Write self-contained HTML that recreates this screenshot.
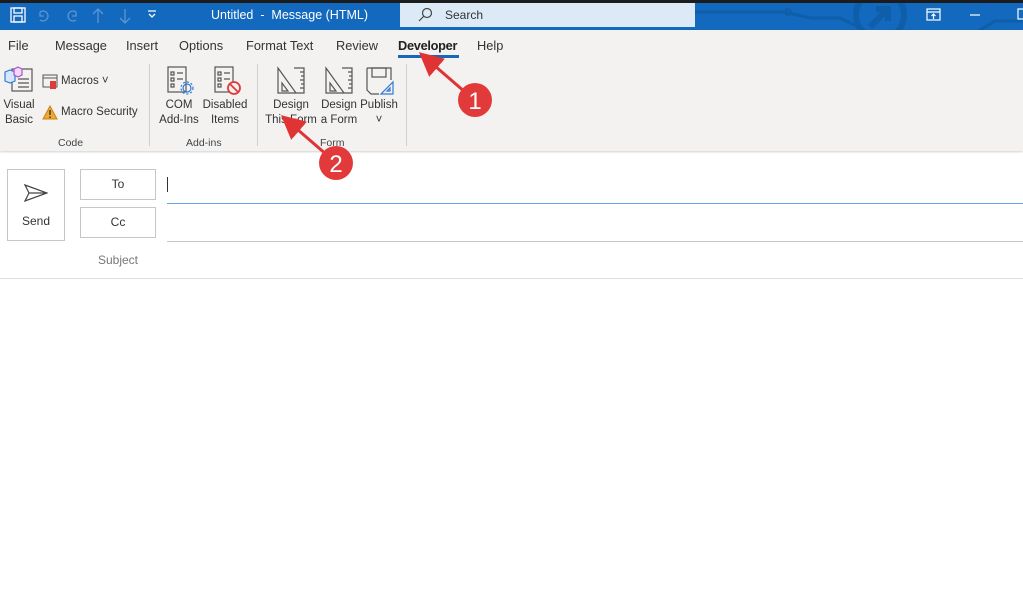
<!DOCTYPE html>
<html><head><meta charset="utf-8"><style>
*{margin:0;padding:0;box-sizing:border-box}
body{width:1023px;height:599px;overflow:hidden;background:#fff;font-family:"Liberation Sans",sans-serif;position:relative}
.a{position:absolute}
.t{font-size:11.5px;color:#333;text-align:center;line-height:15px}
.tab{position:absolute;top:38px;font-size:12.8px;color:#333}
.sep{position:absolute;top:64px;width:1px;height:82px;background:#d2d0ce}
.grp{position:absolute;top:137px;font-size:10.5px;color:#444}
</style></head><body>
<div class="a" style="left:0;top:0;width:1023px;height:3px;background:#1c1c1c"></div>
<div class="a" style="left:0;top:3px;width:1023px;height:27px;background:#1269bd"></div>
<svg class="a" style="left:690px;top:3px" width="333" height="27">
<path d="M5 9 H95 L120 15 H150 L175 27" stroke="#0f5ea9" stroke-width="3" fill="none"/>
<circle cx="98" cy="9" r="3" stroke="#0f5ea9" stroke-width="2" fill="none"/>
<circle cx="190" cy="12" r="24" stroke="#0f5ea9" stroke-width="6" fill="none"/>
<path d="M180 24 L198 6 M186 6 H198 V18" stroke="#0f5ea9" stroke-width="6" fill="none"/>
<path d="M290 27 L305 18 H333" stroke="#0f5ea9" stroke-width="3" fill="none"/>
</svg>
<svg class="a" style="left:10px;top:7px" width="150" height="18" fill="none" stroke-width="1.3">
<rect x="1" y="1" width="14" height="14" stroke="#fff"/><rect x="4" y="1" width="8" height="5" stroke="#fff"/><rect x="4" y="9" width="8" height="6" stroke="#fff"/>
<path d="M30 5 a5 5 0 1 1 0 8 M30 5 v4 h4" stroke="#5e95d4"/>
<path d="M66 5 a5 5 0 1 0 0 8 M66 5 v4 h-4" stroke="#5e95d4"/>
<path d="M88 16 V2 M83 7 L88 2 L93 7" stroke="#5e95d4"/>
<path d="M115 2 V16 M110 11 L115 16 L120 11" stroke="#5e95d4"/>
<path d="M138 4 H146 M139 7 L142 10 L145 7" stroke="#fff"/>
</svg>
<div class="a" style="left:211px;top:8px;font-size:12.5px;color:#fff">Untitled&nbsp; - &nbsp;Message (HTML)</div>
<div class="a" style="left:400px;top:3px;width:295px;height:24px;background:#dce9f7"></div>
<svg class="a" style="left:417px;top:7px" width="16" height="16" fill="none" stroke="#444" stroke-width="1.2"><circle cx="10" cy="6" r="4.5"/><path d="M7 9 L2 14"/></svg>
<div class="a" style="left:445px;top:8px;font-size:12px;color:#333">Search</div>
<svg class="a" style="left:926px;top:8px" width="97" height="14" fill="none" stroke="#fff" stroke-width="1.2"><rect x="1" y="1" width="13" height="11"/><path d="M1 4 H14 M7.5 11 V6 M5.5 8 L7.5 6 L9.5 8"/><path d="M44 7 H54"/><rect x="92" y="1" width="10" height="10"/></svg>
<div class="a" style="left:0;top:30px;width:1023px;height:121px;background:#f3f2f1;box-shadow:0 1px 2px rgba(0,0,0,.18)"></div>
<div class="tab" style="left:8px">File</div>
<div class="tab" style="left:55px">Message</div>
<div class="tab" style="left:126px">Insert</div>
<div class="tab" style="left:179px">Options</div>
<div class="tab" style="left:246px">Format Text</div>
<div class="tab" style="left:336px">Review</div>
<div class="tab" style="left:398px;font-weight:bold;color:#222;letter-spacing:-0.3px">Developer</div>
<div class="a" style="left:398px;top:55px;width:61px;height:3px;background:#1a66b8"></div>
<div class="tab" style="left:477px">Help</div>
<svg class="a" style="left:4px;top:66px" width="30" height="28" fill="none" stroke-width="1.2"><rect x="8" y="3" width="20" height="22" stroke="#555"/><path d="M14 13 H25 M14 17 H25 M14 21 H25" stroke="#555"/><path d="M1 6 L6 4 L11 6 V15 L6 17 L1 15Z" stroke="#2d7ad6" fill="#d6e7fb"/><path d="M10 3 L14 1 L18 3 V9 L14 11 L10 9Z" stroke="#b24bd1" fill="#f0d8f8"/></svg>
<div class="t a" style="left:2px;top:98px;width:34px">Visual<br>Basic</div>
<svg class="a" style="left:42px;top:74px" width="18" height="16" fill="none"><rect x="1" y="1" width="14" height="12" stroke="#555"/><path d="M1 4 H15" stroke="#555"/><rect x="8" y="7" width="6" height="8" fill="#e03b3b"/></svg>
<div class="a" style="left:61px;top:75px;font-size:11.5px;color:#333">Macros ˅</div>
<svg class="a" style="left:42px;top:105px" width="16" height="15"><path d="M8 1 L15 14 H1Z" fill="#f0a830" stroke="#c98410"/><path d="M8 5 V10 M8 11.5 V13" stroke="#333" stroke-width="1.4"/></svg>
<div class="a" style="left:61px;top:106px;font-size:11.5px;color:#333">Macro Security</div>
<div class="grp" style="left:58px">Code</div>
<div class="sep" style="left:149px"></div>
<svg class="a" style="left:166px;top:66px" width="30" height="30" fill="none" stroke-width="1.2"><rect x="2" y="1" width="18" height="25" stroke="#555"/><path d="M5 6 h3 v3 h-3z M11 7 H17 M5 12 h3 v3 h-3z M11 13 H17 M5 18 h3 v3 h-3z" stroke="#555"/><circle cx="21" cy="22" r="4" stroke="#2d7ad6"/><circle cx="21" cy="22" r="6" stroke="#2d7ad6" stroke-dasharray="2 2"/></svg>
<div class="t a" style="left:156px;top:98px;width:46px">COM<br>Add-Ins</div>
<svg class="a" style="left:213px;top:66px" width="30" height="30" fill="none" stroke-width="1.2"><rect x="2" y="1" width="18" height="25" stroke="#555"/><path d="M5 6 h3 v3 h-3z M11 7 H17 M5 12 h3 v3 h-3z M11 13 H17 M5 18 h3 v3 h-3z" stroke="#555"/><circle cx="21" cy="22" r="6" stroke="#e03b3b" stroke-width="1.8" fill="#f3f2f1"/><path d="M17 18 L25 26" stroke="#e03b3b" stroke-width="1.8"/></svg>
<div class="t a" style="left:200px;top:98px;width:50px">Disabled<br>Items</div>
<div class="grp" style="left:186px">Add-ins</div>
<div class="sep" style="left:257px"></div>
<svg class="a" style="left:276px;top:66px" width="30" height="30" fill="none" stroke="#555" stroke-width="1.2"><path d="M2 2 L20 27 H2Z M6 17 L12 25 H6Z M18 2 H28 V27 H20 M28 6 H24 M28 10 H25 M28 14 H24 M28 18 H25 M28 22 H24"/></svg>
<div class="t a" style="left:264px;top:98px;width:54px">Design<br>This Form</div>
<svg class="a" style="left:324px;top:66px" width="30" height="30" fill="none" stroke="#555" stroke-width="1.2"><path d="M2 2 L20 27 H2Z M6 17 L12 25 H6Z M18 2 H28 V27 H20 M28 6 H24 M28 10 H25 M28 14 H24 M28 18 H25 M28 22 H24"/></svg>
<div class="t a" style="left:317px;top:98px;width:44px">Design<br>a Form</div>
<svg class="a" style="left:365px;top:66px" width="30" height="30" fill="none" stroke-width="1.2"><path d="M2 2 H26 V14 M2 2 V24 L6 28 H14" stroke="#555"/><rect x="7" y="2" width="14" height="9" stroke="#555"/><path d="M16 28 L28 16 V28Z M22 25 L25 22 V25Z" stroke="#2d7ad6"/></svg>
<div class="t a" style="left:359px;top:98px;width:40px">Publish<br>˅</div>
<div class="grp" style="left:320px">Form</div>
<div class="sep" style="left:406px"></div>
<div class="a" style="left:7px;top:169px;width:58px;height:72px;border:1px solid #c8c6c4;background:#fff"></div>
<svg class="a" style="left:24px;top:184px" width="24" height="18" fill="none" stroke="#444" stroke-width="1.2"><path d="M1 1 L23 9 L1 17 L5 9Z M5 9 H23"/></svg>
<div class="a" style="left:7px;top:214px;width:58px;text-align:center;font-size:12px;color:#333">Send</div>
<div class="a" style="left:80px;top:169px;width:76px;height:31px;border:1px solid #c8c6c4;text-align:center;line-height:29px;font-size:12px;color:#333">To</div>
<div class="a" style="left:80px;top:207px;width:76px;height:31px;border:1px solid #c8c6c4;text-align:center;line-height:29px;font-size:12px;color:#333">Cc</div>
<div class="a" style="left:167px;top:177px;width:1px;height:15px;background:#333"></div>
<div class="a" style="left:167px;top:203px;width:856px;height:1px;background:#62a8e6"></div>
<div class="a" style="left:167px;top:241px;width:856px;height:1px;background:#c8c6c4"></div>
<div class="a" style="left:80px;top:253px;width:76px;text-align:center;font-size:12px;color:#777">Subject</div>
<div class="a" style="left:0;top:278px;width:1023px;height:1px;background:#e1dfdd"></div>
<svg class="a" style="left:0;top:0" width="1023" height="599">
<defs><marker id="m" markerWidth="8" markerHeight="8" refX="4" refY="4" orient="auto"><path d="M0 0 L8 4 L0 8Z" fill="#e03434"/></marker></defs>
<path d="M465 92 L428 60" stroke="#e03434" stroke-width="3" marker-end="url(#m)"/>
<path d="M327 155 L290 123" stroke="#e03434" stroke-width="3" marker-end="url(#m)"/>
<circle cx="475" cy="100" r="17" fill="#e23a3a"/>
<circle cx="336" cy="163" r="17" fill="#e23a3a"/>
<text x="475" y="109" fill="#fff" font-size="24" text-anchor="middle" font-family="Liberation Sans">1</text>
<text x="336" y="172" fill="#fff" font-size="24" text-anchor="middle" font-family="Liberation Sans">2</text>
</svg>
</body></html>
